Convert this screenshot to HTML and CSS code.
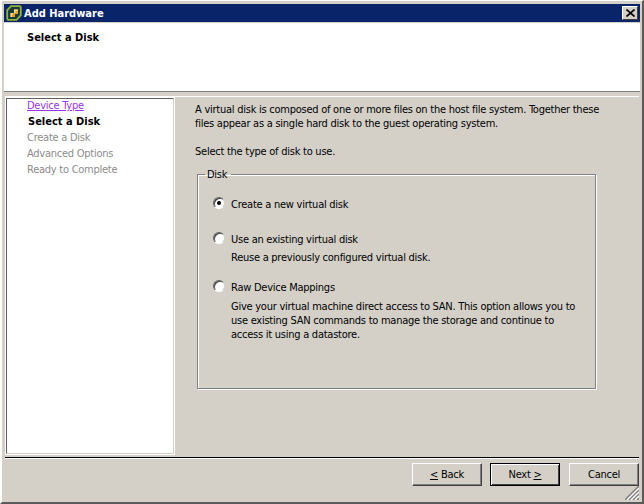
FILE: index.html
```html
<!DOCTYPE html>
<html lang="en">
<head>
<meta charset="utf-8">
<title>Add Hardware</title>
<link rel="stylesheet" href="styles.css">
</head>
<body>
<div class="window">
  <div class="titlebar">
    <svg class="app-icon" width="16" height="16" viewBox="0 0 16 16">
      <path d="M5 1.2H13.5Q14.8 1.2 14.8 2.5V10.5L10.5 14.8H2.5Q1.2 14.8 1.2 13.5V5Z" fill="#1c3a3a" stroke="#8fb339" stroke-width="1.8"/>
      <path d="M8 4.5H12V9H9V12H4.5V8H8Z" fill="#e9a020"/>
      <path d="M8 4.5H12V6H9.5V8H8ZM4.5 8H7V9.5H6V12H4.5Z" fill="#f6d98e"/>
    </svg>
    <span class="title-text">Add Hardware</span>
    <button class="close-btn" type="button" aria-label="Close">
      <svg width="9" height="8" viewBox="0 0 9 8"><path d="M0.5 0.5L8.5 7.5M8.5 0.5L0.5 7.5" stroke="#000" stroke-width="1.7" fill="none"/></svg>
    </button>
  </div>
  <div class="header"><h1 class="header-title">Select a Disk</h1></div>
  <div class="middle">
    <nav class="steps">
      <a class="step step-link" href="#">Device Type</a>
      <div class="step step-current">Select a Disk</div>
      <div class="step step-off">Create a Disk</div>
      <div class="step step-off">Advanced Options</div>
      <div class="step step-off">Ready to Complete</div>
    </nav>
    <main class="content">
      <p class="intro">A virtual disk is composed of one or more files on the host file system. Together these<br>files appear as a single hard disk to the guest operating system.</p>
      <p class="prompt">Select the type of disk to use.</p>
      <fieldset class="group">
        <legend class="group-label">Disk</legend>
        <div class="option option-first">
          <span class="radio radio-on"></span>
          <div class="option-text"><div class="option-name">Create a new virtual disk</div></div>
        </div>
        <div class="option option-second">
          <span class="radio"></span>
          <div class="option-text">
            <div class="option-name">Use an existing virtual disk</div>
            <div class="option-desc">Reuse a previously configured virtual disk.</div>
          </div>
        </div>
        <div class="option option-third">
          <span class="radio"></span>
          <div class="option-text">
            <div class="option-name">Raw Device Mappings</div>
            <div class="option-desc">Give your virtual machine direct access to SAN. This option allows you to<br>use existing SAN commands to manage the storage and continue to<br>access it using a datastore.</div>
          </div>
        </div>
      </fieldset>
    </main>
  </div>
  <div class="footer">
    <button class="btn" type="button"><u>&lt;</u> Back</button>
    <button class="btn btn-default" type="button">Next <u>&gt;</u></button>
    <button class="btn" type="button">Cancel</button>
    <svg class="grip" width="14" height="14" viewBox="0 0 14 14"><path d="M14 0L0 14M14 4L4 14M14 8L8 14M14 12L12 14" stroke="#808080" stroke-width="1.6" fill="none"/><path d="M14 2L2 14M14 6L6 14M14 10L10 14" stroke="#fff" stroke-width="1.2" fill="none"/></svg>
  </div>
</div>
</body>
</html>
```
FILE: styles.css
```css
* { box-sizing: border-box; }
html, body { margin: 0; padding: 0; }
body {
  width: 644px;
  height: 504px;
  overflow: hidden;
  font-family: "DejaVu Sans Condensed", "Liberation Sans", Arial, sans-serif;
  font-size: 11px;
  letter-spacing: -0.25px;
  color: #000;
  background: #d4d0c8;
}
.window {
  position: relative;
  display: flex;
  flex-direction: column;
  width: 644px;
  height: 504px;
  padding: 3px 3px 2px 3px;
  background: #d4d0c8;
  border-top: 1px solid #fff;
  border-left: 2px solid #fff;
  border-right: 2px solid #5a5a5a;
  border-bottom: 2px solid #5a5a5a;
}
.titlebar {
  display: flex;
  align-items: center;
  height: 18px;
  margin-left: -1px;
  margin-right: -1px;
  padding: 0 2px 0 2px;
  background: #0a246a;
  color: #fff;
}
.app-icon { flex: none; margin-right: 2px; }
.title-text { font-weight: bold; font-size: 11px; letter-spacing: 0; flex: 1; }
.close-btn {
  display: flex;
  align-items: center;
  justify-content: center;
  width: 16px;
  height: 14px;
  padding: 0;
  background: #d4d0c8;
  border: 1px solid;
  border-color: #fff #404040 #404040 #fff;
}
.header {
  height: 69px;
  margin: 1px -1px 0 -1px;
  padding: 8px 0 0 23px;
  background: #fff;
  border-bottom: 1px solid #808080;
}
.header-title { margin: 0; font-size: 11px; font-weight: bold; letter-spacing: 0; line-height: 13px; }
.middle {
  display: flex;
  height: 358px;
  margin-top: 4px;
  border-top: 1px solid #fff;
}
.steps {
  display: flex;
  flex-direction: column;
  width: 170px;
  height: 358px;
  padding: 0 0 0 20px;
  background: #fff;
  border-top: 2px solid #606060;
  border-left: 2px solid #606060;
  border-right: 2px solid #d4d0c8;
  border-bottom: 2px solid #d4d0c8;
  outline: 1px solid #fff;
  outline-offset: -1px;
}
.step { height: 16px; line-height: 13px; }
.step-link { color: #9933ee; text-decoration: underline; }
.step-current { font-weight: bold; letter-spacing: 0; padding-left: 1px; }
.step-off { color: #8c8c8c; }
.content { flex: 1; padding: 6px 0 0 20px; }
.intro { margin: 0; line-height: 14px; }
.prompt { margin: 14px 0 0 0; line-height: 14px; }
.group {
  width: 399px;
  height: 221px;
  margin: 9px 0 0 2px;
  padding: 0;
  border: 1px solid #808080;
  box-shadow: 1px 1px 0 #fff, inset 1px 1px 0 #fff;
}
.group-label { margin-left: 7px; padding: 0 4px 0 2px; line-height: 13px; }
.option { display: flex; }
.option-first { margin: 17px 0 0 15px; }
.option-second { margin: 22px 0 0 15px; }
.option-third { margin: 16px 0 0 15px; }
.radio {
  flex: none;
  display: flex;
  align-items: center;
  justify-content: center;
  width: 12px;
  height: 12px;
  margin-top: -1px;
  margin-right: 6px;
  border-radius: 50%;
  background: #fff;
  border: 1px solid;
  border-color: #606060 #d4d0c8 #fff #606060;
  box-shadow: inset 1px 1px 0 #404040;
}
.radio-on::after {
  content: "";
  width: 4px;
  height: 4px;
  border-radius: 50%;
  background: #000;
}
.option-name { line-height: 13px; }
.option-desc { margin-top: 5px; line-height: 14px; }
.option-third .option-desc { margin-top: 6px; }
.footer {
  position: relative;
  display: flex;
  justify-content: flex-end;
  gap: 9px;
  flex: 1;
  margin-top: 3px;
  padding: 5px 0 0 0;
  border-top: 1px solid #000;
  box-shadow: inset 0 1px 0 #fff;
}
.btn {
  width: 70px;
  height: 23px;
  padding: 0;
  font: 11px "DejaVu Sans Condensed", "Liberation Sans", Arial, sans-serif;
  letter-spacing: -0.25px;
  color: #000;
  background: #d4d0c8;
  border: 1px solid;
  border-color: #fff #404040 #404040 #fff;
  box-shadow: inset -1px -1px 0 #808080;
}
.btn-default {
  margin-left: -1px;
  border: 1px solid #000;
  box-shadow: inset 1px 1px 0 #fff, inset -1px -1px 0 #404040;
}
.grip { position: absolute; right: 0; bottom: 0; }
```
